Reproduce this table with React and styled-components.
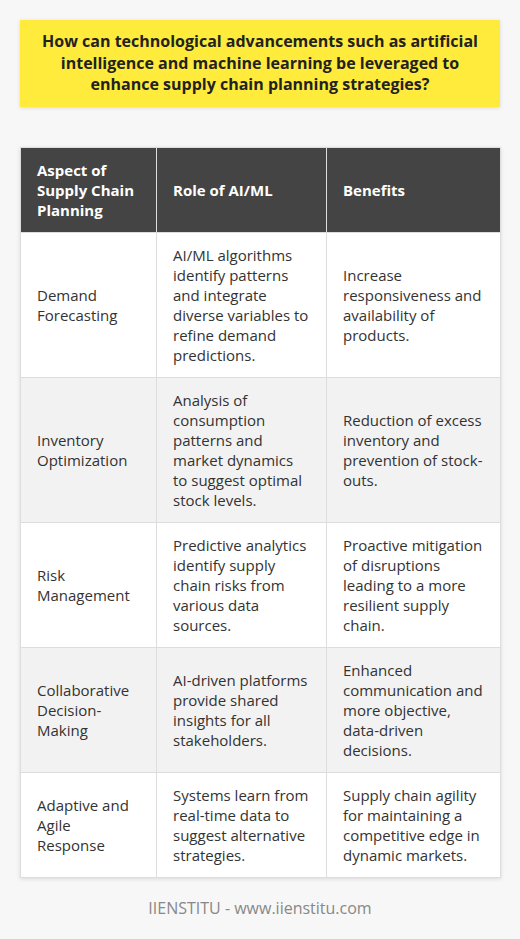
import React from 'react';
import styled, { createGlobalStyle } from 'styled-components';

const GlobalStyle = createGlobalStyle`
    body{
        margin: 0;
        background: #f7f7f7;
        font-family: "Open Sans", "Liberation Sans", sans-serif;
    }
`;

const rows = [
    {
        aspect: 'Demand Forecasting',
        role: 'AI/ML algorithms identify patterns and integrate diverse variables to refine demand predictions.',
        benefit: 'Increase responsiveness and availability of products.'
    },
    {
        aspect: 'Inventory Optimization',
        role: 'Analysis of consumption patterns and market dynamics to suggest optimal stock levels.',
        benefit: 'Reduction of excess inventory and prevention of stock-outs.'
    },
    {
        aspect: 'Risk Management',
        role: 'Predictive analytics identify supply chain risks from various data sources.',
        benefit: 'Proactive mitigation of disruptions leading to a more resilient supply chain.'
    },
    {
        aspect: 'Collaborative Decision-Making',
        role: 'AI-driven platforms provide shared insights for all stakeholders.',
        benefit: 'Enhanced communication and more objective, data-driven decisions.'
    },
    {
        aspect: 'Adaptive and Agile Response',
        role: 'Systems learn from real-time data to suggest alternative strategies.',
        benefit: 'Supply chain agility for maintaining a competitive edge in dynamic markets.'
    }
];

const App = () => {
    return (
        <Page>
            <GlobalStyle />
            <Question>
                How can technological advancements such as artificial intelligence and machine learning be leveraged to enhance supply chain planning strategies?
            </Question>
            <Table>
                <colgroup>
                    <col style={{ width: 136 }} />
                    <col style={{ width: 170 }} />
                    <col style={{ width: 174 }} />
                </colgroup>
                <thead>
                    <tr>
                        <Th>Aspect of Supply Chain Planning</Th>
                        <Th>Role of AI/ML</Th>
                        <Th>Benefits</Th>
                    </tr>
                </thead>
                <tbody>
                    {rows.map((row, i) => (
                        <Row key={row.aspect} $striped={i % 2 === 1}>
                            <Td>{row.aspect}</Td>
                            <Td>{row.role}</Td>
                            <Td>{row.benefit}</Td>
                        </Row>
                    ))}
                </tbody>
            </Table>
            <Footer>IIENSTITU - www.iienstitu.com</Footer>
        </Page>
    );
};

const Page = styled.div`
    padding: 20px 20px 0;
    display: flex;
    flex-direction: column;
`;

const Question = styled.div`
    background: #ffeb3b;
    color: #222;
    font-size: 16px;
    font-weight: 700;
    line-height: 21.5px;
    text-align: center;
    padding: 11px 14px;
    box-shadow: 0 1px 4px rgba(0, 0, 0, 0.12);
`;

const Table = styled.table`
    margin-top: 40px;
    width: 480px;
    table-layout: fixed;
    border-collapse: collapse;
    background: #fff;
    box-shadow: 0 1px 4px rgba(0, 0, 0, 0.12);
    font-size: 15px;
    line-height: 20px;
`;

const Th = styled.th`
    background: #444;
    color: #fff;
    font-weight: 700;
    text-align: left;
    vertical-align: middle;
    padding: 12px 16px;
    border: 1px solid #ddd;
`;

const Row = styled.tr`
    background: ${({ $striped }) => ($striped ? '#f2f2f2' : '#fff')};
`;

const Td = styled.td`
    color: #333;
    vertical-align: middle;
    padding: 12px 16px;
    border: 1px solid #ddd;
`;

const Footer = styled.div`
    margin-top: 20px;
    text-align: center;
    color: #888;
    font-size: 16px;
    line-height: 20px;
`;

export default App;
